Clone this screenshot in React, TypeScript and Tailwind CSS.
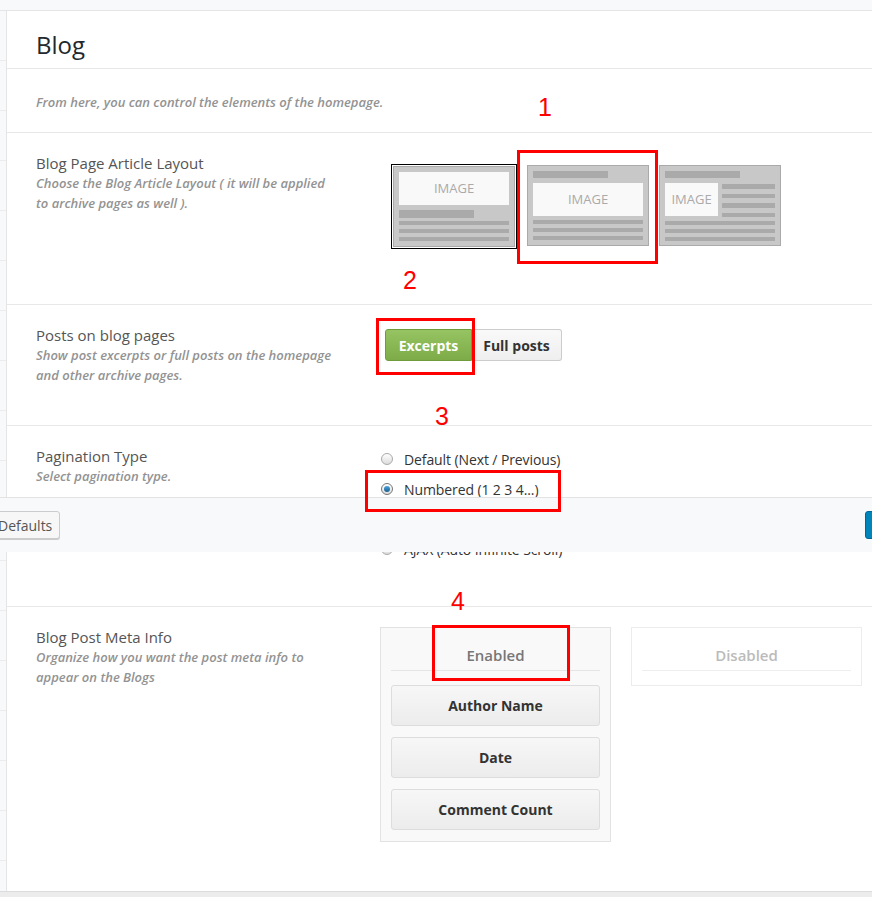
const font = "font-['Open_Sans','Liberation_Sans',sans-serif]"

function Label({ title, desc }: { title: string; desc: string[] }) {
  return (
    <div className="w-[373px] shrink-0 pl-[29px] pt-[20px]">
      <div className="text-[15px] leading-[20px] text-[#555]">{title}</div>
      <div className="text-[13px] leading-[20px] font-semibold italic text-[#939393]">
        {desc.map((d) => (
          <div key={d}>{d}</div>
        ))}
      </div>
    </div>
  )
}

function Lines({ n }: { n: number }) {
  return (
    <div className="flex flex-col gap-[4px]">
      {Array.from({ length: n }).map((_, i) => (
        <div key={i} className="h-[4px] bg-[#aaa]" />
      ))}
    </div>
  )
}

function ImageBox({ className }: { className: string }) {
  return (
    <div className={`flex items-center justify-center bg-[#f9f9f9] text-[13px] text-[#aaa] ${className}`}>
      IMAGE
    </div>
  )
}

function Thumb({ variant }: { variant: 1 | 2 | 3 }) {
  return (
    <div className="h-[81px] w-[122px] border border-[#aaa] bg-[#c8c8c8] p-[5px]">
      {variant === 1 && (
        <>
          <ImageBox className="h-[33px]" />
          <div className="mt-[5px] h-[8px] w-[75px] bg-[#aaa]" />
          <div className="mt-[3px]">
            <Lines n={3} />
          </div>
        </>
      )}
      {variant === 2 && (
        <>
          <div className="h-[7px] w-[75px] bg-[#aaa]" />
          <ImageBox className="mt-[5px] h-[33px]" />
          <div className="mt-[4px]">
            <Lines n={3} />
          </div>
        </>
      )}
      {variant === 3 && (
        <>
          <div className="h-[7px] w-[75px] bg-[#aaa]" />
          <div className="mt-[5px] flex gap-[4px]">
            <ImageBox className="h-[33px] w-[53px]" />
            <div className="flex flex-1 flex-col gap-[5px] pt-px">
              <div className="h-[5px] bg-[#aaa]" />
              <div className="h-[4px] bg-[#aaa]" />
              <div className="h-[5px] bg-[#aaa]" />
              <div className="h-[4px] bg-[#aaa]" />
            </div>
          </div>
          <div className="mt-[4px]">
            <Lines n={3} />
          </div>
        </>
      )}
    </div>
  )
}

function Radio({ label, checked }: { label: string; checked?: boolean }) {
  return (
    <div className="flex h-[30px] items-center">
      <span
        className={`flex h-[12px] w-[12px] items-center justify-center rounded-full border bg-gradient-to-b from-white to-[#dcdcdc] ${
          checked ? 'border-[#777]' : 'border-[#aaa]'
        }`}
      >
        {checked && <span className="h-[6px] w-[6px] rounded-full bg-gradient-to-b from-[#4aa3df] to-[#1b5f8f]" />}
      </span>
      <span className="ml-[11px] text-[14px] tracking-[-0.1px] text-[#333]">{label}</span>
    </div>
  )
}

function MetaItem({ label }: { label: string }) {
  return (
    <div className="flex h-[41px] items-center justify-center rounded-[3px] border border-[#ddd] bg-gradient-to-b from-[#f7f7f7] to-[#ececec] text-[14px] font-bold text-[#333]">
      {label}
    </div>
  )
}

function RedBox({ className }: { className: string }) {
  return <div className={`absolute border-[3px] border-[#ff0000] ${className}`} />
}

function Num({ n, className }: { n: string; className: string }) {
  return (
    <div className={`absolute font-['Liberation_Sans',sans-serif] text-[25px] leading-none text-[#ff0000] ${className}`}>
      {n}
    </div>
  )
}

export default function App() {
  return (
    <div className={`relative h-[897px] w-[872px] overflow-hidden bg-[#f8f9fb] ${font}`}>
      <div className="h-[11px] border-b border-[#e5e5e5] bg-[#f8f9fb]" />
      <div className="flex h-[880px]">
        <div className="w-[7px] shrink-0 border-r border-[#e5e5e5] bg-[#f8f9fb]">
          {Array.from({ length: 17 }).map((_, i) => (
            <div key={i} className="h-[50px] border-b border-[#ececec]" />
          ))}
        </div>
        <div className="flex-1 bg-white">
          <div className="h-[58px] border-b border-[#e8e8e8] pl-[29px] pt-[18px]">
            <h1 className="text-[24px] leading-[32px] text-[#23282d]">Blog</h1>
          </div>
          <div className="h-[64px] border-b border-[#e8e8e8] pl-[29px] pt-[23px]">
            <p className="text-[13px] leading-[20px] font-semibold italic text-[#939393]">
              From here, you can control the elements of the homepage.
            </p>
          </div>

          <div className="flex h-[172px] border-b border-[#e8e8e8]">
            <Label
              title="Blog Page Article Layout"
              desc={['Choose the Blog Article Layout ( it will be applied', 'to archive pages as well ).']}
            />
            <div className="flex items-start gap-[10px] pl-[11px] pt-[31px]">
              <div className="border border-black p-px">
                <Thumb variant={1} />
              </div>
              <div className="pt-px">
                <Thumb variant={2} />
              </div>
              <div className="pt-px">
                <Thumb variant={3} />
              </div>
            </div>
          </div>

          <div className="flex h-[121px] border-b border-[#e8e8e8]">
            <Label
              title="Posts on blog pages"
              desc={['Show post excerpts or full posts on the homepage', 'and other archive pages.']}
            />
            <div className="flex items-start pl-[5px] pt-[24px]">
              <button className="h-[32px] w-[87px] rounded-l-[3px] border border-[#6f9b3d] bg-gradient-to-b from-[#97c462] to-[#7cab47] text-[14px] font-bold text-white">
                Excerpts
              </button>
              <button className="h-[32px] w-[90px] rounded-r-[3px] border border-l-0 border-[#ccc] bg-gradient-to-b from-[#f9f9f9] to-[#efefef] text-[14px] font-bold text-[#333]">
                Full posts
              </button>
            </div>
          </div>

          <div className="flex h-[181px] border-b border-[#e8e8e8]">
            <Label title="Pagination Type" desc={['Select pagination type.']} />
            <div className="pl-px pt-[18px]">
              <Radio label="Default (Next / Previous)" />
              <Radio label="Numbered (1 2 3 4...)" checked />
              <Radio label="Load More Button" />
              <Radio label="AJAX (Auto Infinite Scroll)" />
            </div>
          </div>

          <div className="flex">
            <Label
              title="Blog Post Meta Info"
              desc={['Organize how you want the post meta info to', 'appear on the Blogs']}
            />
            <div className="flex items-start gap-[20px] pt-[20px]">
              <div className="w-[231px] border border-[#e2e2e2] bg-[#f9f9f9] px-[10px] pb-[11px]">
                <div className="flex h-[43px] items-end justify-center border-b border-[#e5e5e5] pb-[4px] text-[15px] font-semibold text-[#777]">
                  Enabled
                </div>
                <div className="mt-[14px] flex flex-col gap-[11px]">
                  <MetaItem label="Author Name" />
                  <MetaItem label="Date" />
                  <MetaItem label="Comment Count" />
                </div>
              </div>
              <div className="w-[231px] border border-[#ececec] bg-white px-[10px] pb-[14px]">
                <div className="flex h-[43px] items-end justify-center border-b border-[#eee] pb-[4px] text-[15px] font-semibold text-[#bbb]">
                  Disabled
                </div>
              </div>
            </div>
          </div>
        </div>
      </div>
      <div className="h-[6px] border-t border-[#dcdcdc] bg-[#ececec]" />

      {/* sticky save bar over the content */}
      <div className="absolute left-0 top-[497px] flex h-[55px] w-[872px] items-center justify-between border-t border-[#e3e3e3] bg-[#f8f9fb]">
        <button className="-ml-[14px] h-[28px] rounded-[3px] border border-[#ccc] bg-[#f7f7f7] pl-[11px] pr-[7px] text-[14px] text-[#555] shadow-[0_1px_0_#ccc]">
          Defaults
        </button>
        <div className="-mr-[20px] h-[28px] w-[27px] rounded-[3px] border border-[#006799] bg-[#0085ba]" />
      </div>

      {/* annotations */}
      <Num n="1" className="left-[538px] top-[95px]" />
      <Num n="2" className="left-[403px] top-[268px]" />
      <Num n="3" className="left-[435px] top-[404px]" />
      <Num n="4" className="left-[451px] top-[589px]" />
      <RedBox className="left-[517px] top-[150px] h-[114px] w-[141px]" />
      <RedBox className="left-[376px] top-[318px] h-[57px] w-[99px]" />
      <RedBox className="left-[365px] top-[470px] h-[42px] w-[196px]" />
      <RedBox className="left-[432px] top-[625px] h-[56px] w-[138px]" />
    </div>
  )
}
